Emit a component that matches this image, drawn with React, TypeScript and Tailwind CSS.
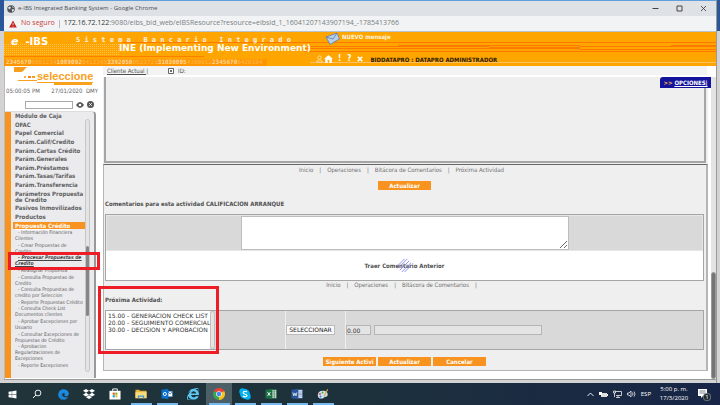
import React from "react";
import { FaWindows, FaEdge, FaDropbox, FaInternetExplorer } from "react-icons/fa";

const menu = [
  "Módulo de Caja",
  "OFAC",
  "Papel Comercial",
  "Parám.Calif/Credito",
  "Parám.Cartas Crédito",
  "Parám.Generales",
  "Parám.Préstamos",
  "Parám.Tasas/Tarifas",
  "Parám.Transferencia",
  "Parámetros Propuesta de Credito",
  "Pasivos Inmovilizados",
  "Productos",
];

const submenu: string[][] = [
  ["Información Financiera", "Clientes"],
  ["Crear Propuestas de", "Credito"],
  ["Procesar Propuestas de", "Credito"],
  ["Reasignar Propuesta"],
  ["Consulta Propuestas de", "Credito"],
  ["Consulta Propuestas de", "credito por Seleccion"],
  ["Reporte Propuestas Crédito"],
  ["Consulta Check List", "Documentos clientes"],
  ["Aprobar Excepciones por", "Usuario"],
  ["Consultar Excepciones de", "Propuestas de Crédito"],
  ["Aprobacion", "Regularizaciones de", "Excepciones"],
  ["Reporte Excepciones"],
];

const verdana = "font-['DejaVu_Sans_Condensed','DejaVu_Sans',sans-serif]";
const segoe = "font-['Open_Sans','Noto_Sans',sans-serif]";

function TitleBar() {
  return (
    <header className={`flex h-[15px] items-center bg-[#dee1e6] pr-2 pl-[3px] text-[6px] text-[#4a4d52] ${segoe}`}>
      <svg viewBox="0 0 16 16" className="size-[8px]" aria-hidden="true">
        <circle cx="8" cy="8" r="7.5" fill="#4c5157" />
        <path d="M2 5l4-2 2 2-2 3-2 1 2 4M10 2l1 3 4 1M9 9l4-1 1 3-3 3z" fill="#dee1e6" />
      </svg>
      <h1 className="ml-[3px]">e-IBS Integrated Banking System - Google Chrome</h1>
      <div className="ml-auto flex items-center gap-[17px] pr-px">
        <button aria-label="Minimizar">
          <svg viewBox="0 0 7 7" className="size-[7px]"><path d="M.5 3.5h6" stroke="#444" /></svg>
        </button>
        <button aria-label="Maximizar">
          <svg viewBox="0 0 7 7" className="size-[7px]"><path d="M1 1h5v5H1z" fill="none" stroke="#444" /></svg>
        </button>
        <button aria-label="Cerrar">
          <svg viewBox="0 0 7 7" className="size-[7px]"><path d="M1 1l5 5M6 1L1 6" stroke="#444" strokeWidth=".9" /></svg>
        </button>
      </div>
    </header>
  );
}

function AddressBar() {
  return (
    <div className={`flex h-[16px] items-center border-b border-[#b9c3cb] bg-[#f1f3f4] pl-[5px] text-[7px] ${segoe}`}>
      <svg viewBox="0 0 8 8" className="size-[8px]" aria-hidden="true">
        <path d="M4 .5L7.8 7.5H.2z" fill="#c5221f" />
        <path d="M4 3v2M4 5.8v.8" stroke="#f1f3f4" strokeWidth=".8" />
      </svg>
      <span className="ml-[4px] text-[#c9413b]">No seguro</span>
      <span className="mx-[4px] h-[8px] w-px bg-[#bbb]" />
      <span className="text-[#7b7e82]">
        <span className="text-[#333]">172.16.72.122</span>
        :9080/eibs_bid_web/eIBSResource?resource=eibsId_1_16041207143907194_-1785413766
      </span>
    </div>
  );
}

function BannerTexture() {
  return (
    <svg className="absolute inset-0 size-full" viewBox="0 0 712 34" preserveAspectRatio="none" aria-hidden="true">
      <defs>
        <pattern id="dots" width="2" height="2" patternUnits="userSpaceOnUse">
          <rect width="1" height="1" fill="#ffc04d" />
        </pattern>
      </defs>
      <rect width="712" height="34" fill="#ffa500" />
      <rect y="11" width="116" height="12" fill="url(#dots)" />
      <rect y="24" width="200" height="1" fill="#ff7d00" />
      <rect y="27" width="263" height="7" fill="#ff9600" />
      <g fill="#ff7800">
        <rect x="118" y="10" width="594" height="1" />
        <rect x="300" y="14" width="94" height="1" />
        <rect x="300" y="16" width="94" height="1" />
        <rect x="300" y="19" width="412" height="1" />
        <rect x="394" y="13" width="91" height="2" />
        <rect x="394" y="16" width="91" height="1" />
        <rect x="485" y="13" width="91" height="1" />
        <rect x="485" y="15" width="91" height="2" />
        <rect x="576" y="14" width="91" height="1" />
        <rect x="576" y="17" width="91" height="1" />
        <rect x="667" y="13" width="45" height="2" />
        <rect x="667" y="17" width="45" height="1" />
      </g>
      <rect x="306" y="30" width="406" height="1" fill="#ffc060" />
    </svg>
  );
}

function Banner() {
  return (
    <div className="relative h-[34px] overflow-hidden bg-[#ffa500]">
      <BannerTexture />
      <div className="relative flex h-full">
        <div className="w-[72px] shrink-0 pt-[2px] pl-[7px] leading-[12px] font-bold whitespace-nowrap text-white font-['DejaVu_Sans',sans-serif]">
          <span className="text-[11px] italic">e</span>
          <span className="ml-[7px] text-[10px]">-IBS</span>
        </div>
        <div className="w-[232px] shrink-0">
          <p className="pt-[5px] text-[7px] leading-[7px] font-bold whitespace-pre text-[#fff0e0] font-['DejaVu_Sans_Mono',monospace]">
            {"S i s t e m a   B a n c a r i o   I n t e g r a d o"}
          </p>
          <p className="pl-[43px] text-[9px] leading-[9px] font-bold whitespace-nowrap text-white font-['DejaVu_Sans',sans-serif]">
            INE (Implementing New Environment)
          </p>
          <p className="-ml-[70px] pt-[5px] text-[6px] leading-[7px] whitespace-nowrap text-[#ffb84d] font-['DejaVu_Sans_Mono',monospace]">
            <b className="text-[#ffd699]">2345670</b>0001234<b className="text-[#ffd699]">1089092</b>0412345
            <b className="text-[#ffd699]">3392050</b>0023723<b className="text-[#ffd699]">31030005</b>4300012
            <b className="text-[#ffd699]">2345670</b>0420194
          </p>
        </div>
        <div className="flex min-w-0 flex-1 flex-col">
          <div className={`flex h-[12px] items-start pl-[17px] text-[6px] font-bold text-[#fff3df] ${verdana}`}>
            <svg viewBox="0 0 15 13" className="h-[13px] w-[15px] shrink-0" aria-hidden="true">
              <path d="M1 5L12 1l2.500 6L5 12.500z" fill="#b8cfea" stroke="#5a7ba6" strokeWidth=".8" />
              <path d="M1 5l7 2 4-6" fill="none" stroke="#5a7ba6" strokeWidth=".8" />
            </svg>
            <a href="#mensaje" className="ml-[2px] leading-[9px] whitespace-nowrap">NUEVO mensaje</a>
          </div>
          <div className={`flex h-[22px] items-center pt-[8px] pl-[8px] text-[6px] text-white ${verdana}`}>
            <svg viewBox="0 0 7 8" className="h-[8px] w-[7px]" aria-hidden="true">
              <circle cx="3.500" cy="2.500" r="1.700" fill="none" stroke="#ffe3b0" strokeWidth=".8" />
              <path d="M.6 7c0-3 5.800-3 5.800 0z" fill="none" stroke="#ffe3b0" strokeWidth=".8" />
            </svg>
            <svg viewBox="0 0 9 8" className="ml-px h-[8px] w-[9px]" aria-hidden="true">
              <path d="M4.500 0L9 4H7.800v4H5.400V5H3.600v3H1.200V4H0z" fill="#fff" />
            </svg>
            <b className="ml-[5px] text-[8px] leading-[8px]">!</b>
            <b className="ml-[6px] text-[8px] leading-[8px]">?</b>
            <svg viewBox="0 0 6 6" className="ml-[6px] size-[6px]" aria-hidden="true">
              <path d="M.8.8l4.400 4.400M5.200.8L.8 5.200" stroke="#fff" strokeWidth="1.600" />
            </svg>
            <span className="ml-[7px] font-bold whitespace-nowrap text-[#2b1b00]">BIDDATAPRO : DATAPRO ADMINISTRADOR</span>
          </div>
        </div>
      </div>
    </div>
  );
}

function Sidebar() {
  return (
    <aside className="flex w-[95px] shrink-0 flex-col border-l border-[#bbb] bg-white text-[#5f5f5f]">
      <div className="flex h-[18px] items-center">
        <svg viewBox="0 0 32 18" className="h-[18px] w-[32px]" aria-hidden="true">
          <path d="M9 1h14c-3 0-4 5-7 5H9z" fill="#f99d1c" />
          <path d="M19 10h2v2h-2z" fill="#f9b233" />
          <path d="M23 10h3v2h-3z" fill="#f58220" />
          <path d="M27 10h3v2h-3z" fill="#f9a01c" />
          <path d="M13 14h19v1H13z" fill="#f9a01c" />
        </svg>
        <div className="border-b border-[#f9a01c] pt-[3px]">
          <p className="text-[11px] leading-[11px] font-bold text-[#f9a01c] font-['Liberation_Sans',sans-serif]">seleccione</p>
        </div>
      </div>
      <div className="mr-[7px] ml-auto -mt-px h-[2px] w-[38px] bg-[#f9a01c]" />
      <div className="mt-[2px] flex justify-between pr-px pl-px text-[6px] leading-[8px] whitespace-nowrap">
        <span>05:00:05 PM</span>
        <span>27/01/2020&nbsp; DMY</span>
      </div>
      <form className="mt-[5px] mb-[2px] flex h-[9px] items-center pl-[20px]">
        <input aria-label="Buscar" className="h-[8px] w-[48px] border border-[#aaa] bg-white px-px text-[6px]" />
        <svg viewBox="0 0 8 8" className="ml-[3px] size-[8px]" aria-hidden="true">
          <path d="M0 4q4-6 8 0q-4 6-8 0z" fill="#555" />
          <circle cx="4" cy="4" r="1.300" fill="#fff" />
        </svg>
        <svg viewBox="0 0 8 8" className="ml-[3px] size-[7px]" aria-hidden="true">
          <circle cx="4" cy="4" r="4" fill="#555" />
          <path d="M2.500 2.500l3 3M5.500 2.500l-3 3" stroke="#fff" strokeWidth="1" />
        </svg>
      </form>
      <nav className="mr-[3px] flex h-[267px] rounded-tr-[4px] border-t border-r-2 border-t-[#ddd] border-r-[#999] bg-[#ebebee]">
        <div className="w-[6px] shrink-0 bg-[#f7931e]" />
        <div className="flex h-[260px] min-w-0 flex-1 flex-col overflow-hidden pt-px">
          <ul className="flex h-[109px] flex-col justify-between pb-[2px] pl-[4px] text-[6px] leading-[6px] font-bold">
            {menu.map((m) => (
              <li key={m}>
                <a href="#menu" className="block">{m}</a>
              </li>
            ))}
          </ul>
          <a href="#propuesta" className="ml-[2px] block bg-[#f7931e] pl-[2px] text-[6px] leading-[7px] font-bold text-white underline">
            Propuesta Crédito
          </a>
          <ul className="flex h-[139px] flex-col justify-between pl-[4px] text-[5px] leading-[6px] whitespace-nowrap">
            {submenu.map((lines, i) => (
              <li key={i} className={i === 2 ? "font-bold text-[#444] italic underline" : ""}>
                <a href="#actividad" className="block">
                  {lines.map((l, j) => (
                    <span key={l} className={j === 0 ? "block pl-[3px]" : "block"}>
                      {j === 0 ? "- " + l : l}
                    </span>
                  ))}
                </a>
              </li>
            ))}
          </ul>
        </div>
        <div className="mt-[7px] mr-[4px] h-[253px] w-[5px] shrink-0 rounded-full border border-[#c6c6c6] bg-[#e4e4e4] pt-[126px]">
          <div className="h-[70px] rounded-full bg-[#868686]" />
        </div>
      </nav>
    </aside>
  );
}

function Crumbs({ items, trailing }: { items: string[]; trailing?: boolean }) {
  return (
    <nav className="flex justify-center gap-[6px] pr-[6px] text-[6px] leading-[8px] whitespace-nowrap text-[#707070]">
      {items.map((t, i) => (
        <React.Fragment key={t}>
          {i > 0 && <span>|</span>}
          <a href="#seccion">{t}</a>
        </React.Fragment>
      ))}
      {trailing && <span>|</span>}
    </nav>
  );
}

function OrangeButton({ children }: { children: string }) {
  return (
    <button className="h-[9px] w-[53px] bg-[#f7931e] px-px text-[6px] leading-[9px] font-bold whitespace-nowrap text-white">
      {children}
    </button>
  );
}

function Content() {
  return (
    <main className="flex min-w-0 flex-1 flex-col bg-white pl-[4px] text-[#505050]">
      <div className="mr-[9px] flex h-[9px] items-center bg-[#f3f3f3] pl-[4px] text-[6px] leading-[8px]">
        <a href="#cliente" className="underline">Cliente Actual |</a>
        <svg viewBox="0 0 6 6" className="ml-[20px] size-[6px]" aria-hidden="true">
          <path d="M.5.500h5v5h-5z" fill="#fff" stroke="#555" strokeWidth=".9" />
          <path d="M2 3h2M3 2v2" stroke="#222" strokeWidth=".8" />
        </svg>
        <span className="ml-[4px]">ID:</span>
      </div>
      <div className="mt-[2px] flex flex-1">
        <div className="relative min-w-0 flex-1 pr-[3px]">
          <button className="absolute top-0 right-0 h-[11px] w-[51px] rounded-tl-[3px] bg-[#13139c] text-[6px] leading-[11px] font-bold whitespace-nowrap text-white">
            <span className="text-[#f5b642]">&gt;&gt;</span> <span className="underline">OPCIONES|</span>
          </button>
          <section className="h-[87px] bg-[#efefef] pr-[2px] pl-px">
            <div className="h-[86px] border-x-2 border-b-2 border-[#a5a5a5]" />
          </section>
          <section className="border border-r-2 border-[#b5b5b5] border-t-[#666] bg-[#efefef] pr-[2px] pb-[4px] pl-px">
            <div className="pt-px">
              <Crumbs items={["Inicio", "Operaciones", "Bitácora de Comentarios", "Próxima Actividad"]} />
            </div>
            <div className="mt-[7px] flex justify-center">
              <OrangeButton>Actualizar</OrangeButton>
            </div>
            <label htmlFor="comentario" className="mt-[10px] block text-[6px] leading-[8px] font-bold">
              Comentarios para esta actividad CALIFICACION ARRANQUE
            </label>
            <div className="mt-[6px] border border-[#a5a5a5] bg-white">
              <div className="flex h-[36px] justify-center border border-[#e6e6e6] bg-[#d9d9d9]">
                <textarea id="comentario" className="block h-[34px] w-[328px] resize border border-[#bdbdbd] bg-white text-[6px]" />
              </div>
              <div className="relative flex h-[29px] items-center justify-center">
                <button className="text-[6px] leading-[8px] font-bold">Traer Comentario Anterior</button>
                <svg viewBox="0 0 16 16" className="absolute size-[15px]" aria-hidden="true">
                  <path d="M1 8l7-7M1 11L11 1M3 13L13 3M5 15L15 5M8 15l7-7" stroke="#7d80e8" strokeWidth=".9" />
                </svg>
              </div>
            </div>
            <Crumbs items={["Inicio", "Operaciones", "Bitácora de Comentarios"]} trailing />
            <label htmlFor="proxima" className="mt-[7px] block text-[6px] leading-[8px] font-bold">
              Próxima Actividad:
            </label>
            <div className="mt-[6px] flex h-[40px] border border-[#a5a5a5] bg-[#d9d9d9]">
              <div className="flex w-[180px] border-r border-[#efefef]">
                <select
                  id="proxima"
                  size={4}
                  className="h-[38px] w-[104px] appearance-none overflow-hidden bg-white pt-px text-[6px] leading-[7px] text-[#333] font-['DejaVu_Sans',sans-serif] [&>option]:p-0 [&>option]:pl-[2px]"
                >
                  <option>15.00 - GENERACION CHECK LIST</option>
                  <option>20.00 - SEGUIMIENTO COMERCIAL</option>
                  <option>30.00 - DECISION Y APROBACION</option>
                </select>
                <div className="h-[38px] w-[5px] rounded-full border border-[#c0c0c0] bg-[#e4e4e4]" />
              </div>
              <div className="flex w-[60px] items-center border-r border-[#efefef]">
                <button className="h-[10px] w-[49px] border border-[#bbb] bg-[#f8f8f8] text-[6px] leading-[8px] text-[#222] font-['DejaVu_Sans',sans-serif]">SELECCIONAR</button>
              </div>
              <div className="flex flex-1 items-center gap-[3px]">
                <input aria-label="Código" defaultValue="0.00" className="h-[10px] w-[25px] border border-[#b5b5b5] bg-[#e4e4e4] text-[6px] text-[#333] font-['DejaVu_Sans',sans-serif]" />
                <input aria-label="Descripción" readOnly className="h-[10px] w-[168px] border border-[#b5b5b5] bg-[#e4e4e4] text-[6px]" />
              </div>
            </div>
            <div className="mt-[7px] flex justify-center gap-[2px]">
              <OrangeButton>Siguiente Activi</OrangeButton>
              <OrangeButton>Actualizar</OrangeButton>
              <OrangeButton>Cancelar</OrangeButton>
            </div>
          </section>
        </div>
        <div className="flex w-[5px] flex-col justify-end bg-[#e3e3e3]">
          <div className="h-[107px] rounded-full border border-[#999] bg-[#757577]" />
        </div>
      </div>
    </main>
  );
}

function TaskIcon({ label, open, active, first, children }: { label: string; open?: boolean; active?: boolean; first?: boolean; children: React.ReactNode }) {
  return (
    <button
      aria-label={label}
      className={`flex h-full flex-col items-center ${first ? "w-[24px]" : "w-[26px]"} ${active ? "bg-[#4d5f66]" : ""}`}
    >
      <span className="flex flex-1 items-center justify-center pt-[2px]">{children}</span>
      <span className={`h-[2px] w-[21px] ${open ? "bg-[#76b9ed]" : ""}`} />
    </button>
  );
}

function Taskbar() {
  const box = "size-[12px]";
  return (
    <footer className={`flex h-[22px] shrink-0 bg-linear-to-r from-[#20343a] via-[#1d313c] to-[#182547] text-[6px] text-white ${segoe}`}>
      <TaskIcon label="Inicio" first><FaWindows className="size-[9px]" /></TaskIcon>
      <TaskIcon label="Buscar">
        <svg viewBox="0 0 10 10" className="size-[10px]"><circle cx="6" cy="4" r="2.900" fill="none" stroke="#fff" strokeWidth=".9" /><path d="M4 6L1 9" stroke="#fff" /></svg>
      </TaskIcon>
      <TaskIcon label="Edge"><FaEdge className="size-[11px] text-[#1b8ae0]" /></TaskIcon>
      <TaskIcon label="Dropbox"><FaDropbox className="size-[12px]" /></TaskIcon>
      <TaskIcon label="Store">
        <svg viewBox="0 0 13 13" className={box}>
          <path d="M4 3.500V1h5v2.500" fill="none" stroke="#fff" />
          <path d="M.5 3h12v9.500H.5z" fill="#fff" />
          <path d="M4 5h2.300v2.300H4z" fill="#f25022" /><path d="M6.800 5h2.300v2.300H6.800z" fill="#7fba00" />
          <path d="M4 7.800h2.300v2.300H4z" fill="#00a4ef" /><path d="M6.800 7.800h2.300v2.300H6.800z" fill="#ffb900" />
        </svg>
      </TaskIcon>
      <TaskIcon label="Explorador" open>
        <svg viewBox="0 0 13 13" className={box}>
          <path d="M.5 2h4l1 1h7v8H.5z" fill="#e8b339" /><path d="M.5 4.500h12V11H.5z" fill="#fbdc7b" />
          <path d="M3 11V8h7v3H8.500V9.500h-4V11z" fill="#3d9be0" />
        </svg>
      </TaskIcon>
      <TaskIcon label="Outlook" open>
        <svg viewBox="0 0 13 13" className={box}>
          <path d="M7 3.500h5.500v6H7z" fill="#fff" stroke="#0a64b8" strokeWidth=".6" /><path d="M7 4l3 2.500L12.500 4" fill="none" stroke="#0a64b8" strokeWidth=".8" />
          <path d="M.5 2L8 .8v11.400L.5 11z" fill="#0a6fc8" /><circle cx="4.200" cy="6.500" r="1.700" fill="none" stroke="#fff" />
        </svg>
      </TaskIcon>
      <TaskIcon label="Internet Explorer"><FaInternetExplorer className="size-[12px] text-[#5cc8f2]" /></TaskIcon>
      <TaskIcon label="Chrome" open active>
        <svg viewBox="0 0 12 12" className="size-[12px]">
          <path d="M6 6L.9 3A6 6 0 0 1 11.200 3z" fill="#ea4335" />
          <path d="M6 6L11.200 3A6 6 0 0 1 6 12z" fill="#fbc116" />
          <path d="M6 6v6A6 6 0 0 1 .9 3z" fill="#34a853" />
          <circle cx="6" cy="6" r="2.800" fill="#fff" /><circle cx="6" cy="6" r="2.200" fill="#4285f4" />
        </svg>
      </TaskIcon>
      <TaskIcon label="Skype" open>
        <svg viewBox="0 0 12 12" className="size-[12px]">
          <circle cx="6" cy="6" r="5" fill="#00aff0" /><circle cx="3.500" cy="3.500" r="3.200" fill="#00aff0" /><circle cx="8.500" cy="8.500" r="3.200" fill="#00aff0" />
          <path d="M8 4.200C7 2.800 4.200 3 4.200 4.700S8 6 8 7.500 5 9.300 4 7.800" fill="none" stroke="#fff" strokeWidth="1.200" />
        </svg>
      </TaskIcon>
      <TaskIcon label="Excel" open>
        <svg viewBox="0 0 13 13" className={box}>
          <path d="M7 2h5.500v9H7z" fill="#fff" stroke="#1e7145" strokeWidth=".7" /><path d="M7 4.200h5.500M7 6.500h5.500M7 8.800h5.500M10 2v9" stroke="#1e7145" strokeWidth=".7" />
          <path d="M.5 2L8 .8v11.400L.5 11z" fill="#1e7145" /><path d="M2.800 4.500l3 4M5.800 4.500l-3 4" stroke="#fff" />
        </svg>
      </TaskIcon>
      <TaskIcon label="Word" open>
        <svg viewBox="0 0 13 13" className={box}>
          <path d="M7 2h5.500v9H7z" fill="#fff" stroke="#2a5699" strokeWidth=".7" /><path d="M8 4.200h4M8 5.700h4M8 7.200h4M8 8.800h4" stroke="#2a5699" strokeWidth=".6" />
          <path d="M.5 2L8 .8v11.400L.5 11z" fill="#2a5699" /><path d="M2 4.800l1 3.700 1.200-3 1.200 3 1-3.700" fill="none" stroke="#fff" strokeWidth=".8" />
        </svg>
      </TaskIcon>
      <TaskIcon label="Paint" open>
        <svg viewBox="0 0 13 13" className={box}>
          <path d="M6 3c4 0 6 2 5.500 4.500S9 9 8 10s-3 2-5.500 1S0 3 6 3z" fill="#cfe3f2" />
          <circle cx="3.200" cy="6.500" r="1.100" fill="#e64a3b" /><circle cx="6" cy="5" r="1.100" fill="#4caf50" />
          <circle cx="3.800" cy="9.200" r="1.100" fill="#2f7fd1" /><path d="M7 9l4-8 1.200.6L8 9.500z" fill="#e39a3c" />
        </svg>
      </TaskIcon>
      <div className="ml-auto flex items-center gap-[5px] whitespace-nowrap">
        <svg viewBox="0 0 7 7" className="size-[7px]" aria-hidden="true"><path d="M.5 5l3-3 3 3" fill="none" stroke="#fff" strokeWidth=".9" /></svg>
        <svg viewBox="0 0 9 7" className="h-[7px] w-[9px]" aria-hidden="true"><path d="M2 2h6v4H2z" fill="#ddd" /><path d="M0 1h3v3H0z" fill="#fff" /><path d="M8 3h1v2H8z" fill="#fff" /></svg>
        <svg viewBox="0 0 9 8" className="h-[8px] w-[9px]" aria-hidden="true"><path d="M2 1.500h6.500v4H3M5 5.500v2M3 7.500h4M.5 1v2h2V1zM1.500 3v4" fill="none" stroke="#eee" strokeWidth=".8" /></svg>
        <svg viewBox="0 0 9 8" className="h-[8px] w-[9px]" aria-hidden="true"><path d="M.5 3v2H2l2 2V1L2 3zM5.500 2.500q1 1.500 0 3M7 1.500q2 2.500 0 5" fill="none" stroke="#eee" strokeWidth=".8" /></svg>
        <span>ESP</span>
        <div className="ml-[2px] w-[32px] text-center leading-[9px]">
          <p>5:00 p. m.</p>
          <p>17/3/2020</p>
        </div>
        <div className="mr-[9px] ml-[3px] flex">
          <svg viewBox="0 0 13 13" className="size-[13px]" aria-label="1 notificación">
            <path d="M0 1h9v7H5L3 10V8H0z" fill="#fff" /><path d="M1.500 3h6M1.500 5h6" stroke="#456" strokeWidth=".7" />
            <circle cx="9" cy="9" r="3.800" fill="#222a33" stroke="#9aa" strokeWidth=".6" />
            <text x="9" y="11.300" fontSize="6" textAnchor="middle" fill="#fff">1</text>
          </svg>
        </div>
      </div>
    </footer>
  );
}

export default function App() {
  return (
    <div className={`relative flex min-h-screen flex-col bg-[#d3d3d3] ${verdana}`}>
      <div className="flex flex-1">
        <div className="w-[4px] shrink-0"><div className="h-[31px] bg-[#2b579a]" /></div>
        <div className="mb-[3px] flex min-w-0 flex-1 flex-col border-t border-b border-t-[#5e9fdc] border-b-[#999] bg-white">
          <TitleBar />
          <AddressBar />
          <Banner />
          <div className="flex flex-1">
            <Sidebar />
            <Content />
          </div>
        </div>
        <div className="w-[4px] shrink-0 border-l border-[#999]"><div className="h-[31px] bg-[#2b579a]" /></div>
      </div>
      <Taskbar />
      <div className="pointer-events-none absolute top-[252px] left-[8px] h-[18px] w-[92px] border-[3px] border-[#ee1c25]" />
      <div className="pointer-events-none absolute top-[286px] left-[98px] h-[68px] w-[121px] border-[3px] border-[#ee1c25]" />
    </div>
  );
}
